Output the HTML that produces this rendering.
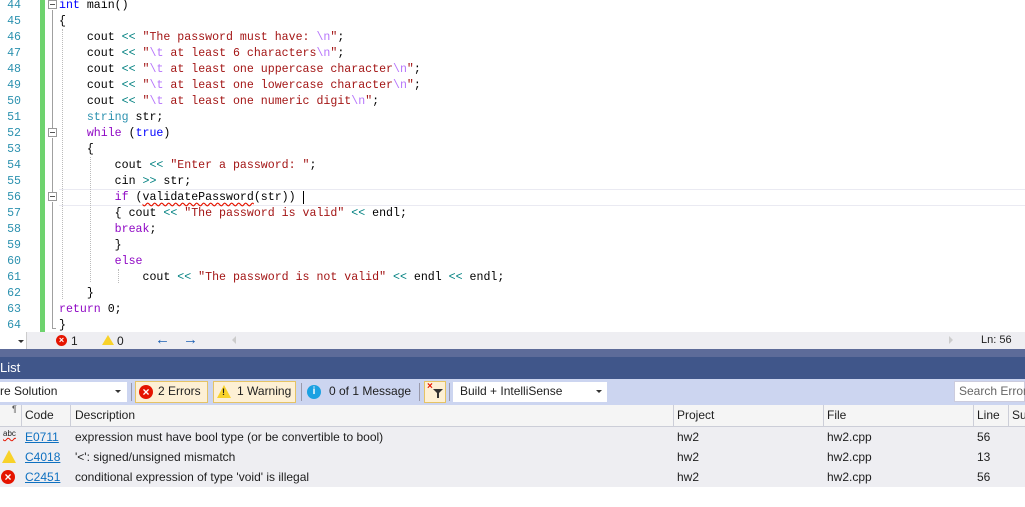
<!DOCTYPE html>
<html><head><meta charset="utf-8"><style>
*{margin:0;padding:0;box-sizing:border-box}
body{width:1025px;height:507px;overflow:hidden;background:#fff;position:relative;font-family:"Liberation Sans",sans-serif}
.ln{position:absolute;left:0;width:21px;text-align:right;font:11.6px "Liberation Mono",monospace;color:#2b91af;line-height:16px}
.code{position:absolute;left:59px;font:11.6px "Liberation Mono",monospace;color:#000;line-height:16px;white-space:pre}
.k{color:#0000ff}.c{color:#8f08c4}.s{color:#a31515}.e{color:#b776fb}.t{color:#2b91af}.o{color:#008080}
.ab{position:absolute}
.box{position:absolute;left:48px;width:9px;height:9px;border:1px solid #999;background:#fff}
.box:after{content:"";position:absolute;left:1px;top:3px;width:5px;height:1px;background:#555}
.vd{position:absolute;border-left:1px dotted #bbb;width:0}
.ui{font-size:12px;color:#1e1e1e;position:absolute;white-space:nowrap}
.hdr{position:absolute;top:405px;height:22px;line-height:21px;font-size:12px;color:#1e1e1e}
.sep{position:absolute;top:405px;width:1px;height:22px;background:#ccced8}
.row{position:absolute;left:0;width:1025px;height:20px;line-height:20px;font-size:12px;color:#1e1e1e}
.row span{position:absolute}
.lnk{color:#0e70c0;text-decoration:underline}
</style></head><body>
<div class="ab" style="left:40px;top:0;width:5px;height:332px;background:#6ed36e"></div>
<div class="ab" style="left:59px;top:189px;width:966px;height:17px;border-top:1px solid #eaeaf2;border-bottom:1px solid #eaeaf2"></div>
<div class="box" style="top:0px"></div>
<div class="box" style="top:128px"></div>
<div class="box" style="top:192px"></div>
<div class="ab" style="left:52px;top:10px;width:1px;height:118px;background:#a0a0a0"></div>
<div class="ab" style="left:52px;top:138px;width:1px;height:54px;background:#a0a0a0"></div>
<div class="ab" style="left:52px;top:202px;width:1px;height:126px;background:#a0a0a0"></div>
<div class="ab" style="left:52px;top:328px;width:4px;height:1px;background:#a0a0a0"></div>
<div class="vd" style="left:62px;top:29px;height:270px"></div>
<div class="vd" style="left:90px;top:157px;height:125px"></div>
<div class="vd" style="left:118px;top:269px;height:14px"></div>
<div class="ln" style="top:-2px">44<br>45<br>46<br>47<br>48<br>49<br>50<br>51<br>52<br>53<br>54<br>55<br>56<br>57<br>58<br>59<br>60<br>61<br>62<br>63<br>64</div>
<div class="code" style="top:-2px"><span class="k">int</span> main()
{
    cout <span class="o">&lt;&lt;</span> <span class="s">"The password must have: </span><span class="e">\n</span><span class="s">"</span>;
    cout <span class="o">&lt;&lt;</span> <span class="s">"</span><span class="e">\t</span><span class="s"> at least 6 characters</span><span class="e">\n</span><span class="s">"</span>;
    cout <span class="o">&lt;&lt;</span> <span class="s">"</span><span class="e">\t</span><span class="s"> at least one uppercase character</span><span class="e">\n</span><span class="s">"</span>;
    cout <span class="o">&lt;&lt;</span> <span class="s">"</span><span class="e">\t</span><span class="s"> at least one lowercase character</span><span class="e">\n</span><span class="s">"</span>;
    cout <span class="o">&lt;&lt;</span> <span class="s">"</span><span class="e">\t</span><span class="s"> at least one numeric digit</span><span class="e">\n</span><span class="s">"</span>;
    <span class="t">string</span> str;
    <span class="c">while</span> (<span class="k">true</span>)
    {
        cout <span class="o">&lt;&lt;</span> <span class="s">"Enter a password: "</span>;
        cin <span class="o">&gt;&gt;</span> str;
        <span class="c">if</span> (<span style="text-decoration:underline wavy #e51400;text-underline-offset:2px">validatePassword</span>(str)) <span style="border-left:1px solid #000"></span>
        { cout <span class="o">&lt;&lt;</span> <span class="s">"The password is valid"</span> <span class="o">&lt;&lt;</span> endl;
        <span class="c">break</span>;
        }
        <span class="c">else</span>
            cout <span class="o">&lt;&lt;</span> <span class="s">"The password is not valid"</span> <span class="o">&lt;&lt;</span> endl <span class="o">&lt;&lt;</span> endl;
    }
<span class="c">return</span> 0;
}</div>
<!-- status bar -->
<div class="ab" style="left:0;top:332px;width:1025px;height:17px;background:#eeeef2"></div>
<div class="ab" style="left:0;top:332px;width:27px;height:17px;background:#fff;border-right:1px solid #ccc"></div>
<div class="ab" style="left:18px;top:340px;border:3px solid transparent;border-top:3px solid #333"></div>
<div class="ab" style="left:56px;top:335px;width:11px;height:11px;border-radius:50%;background:#e51400;color:#fff;font-size:9px;line-height:11px;text-align:center;font-weight:bold">×</div>
<div class="ui" style="left:71px;top:334px">1</div>
<div class="ab" style="left:102px;top:335px;width:0;height:0;border-left:6px solid transparent;border-right:6px solid transparent;border-bottom:10px solid #f8d22a"></div>
<div class="ui" style="left:117px;top:334px">0</div>
<div class="ui" style="left:155px;top:331px;color:#1b5fb3;font-size:15px">←</div>
<div class="ui" style="left:183px;top:331px;color:#1b5fb3;font-size:15px">→</div>
<div class="ab" style="left:228px;top:336px;border:4px solid transparent;border-right:4px solid #ccc"></div>
<div class="ab" style="left:949px;top:336px;border:4px solid transparent;border-left:4px solid #ccc"></div>
<div class="ui" style="left:981px;top:334px;font-size:11px">Ln: 56</div>
<!-- title -->
<div class="ab" style="left:0;top:349px;width:1025px;height:8px;background:#5d6b99"></div>
<div class="ab" style="left:0;top:357px;width:1025px;height:22px;background:#40568a"></div>
<div class="ui" style="left:0;top:360px;color:#fff;font-size:13px">List</div>
<!-- toolbar -->
<div class="ab" style="left:0;top:379px;width:1025px;height:26px;background:#ccd5f0"></div>
<div class="ab" style="left:0;top:382px;width:127px;height:20px;background:#fff"></div>
<div class="ui" style="left:0;top:384px">re Solution</div>
<div class="ab" style="left:115px;top:390px;border:3px solid transparent;border-top:3px solid #333"></div>
<div class="ab" style="left:131px;top:383px;width:1px;height:18px;background:#99a"></div>
<div class="ab" style="left:135px;top:381px;width:73px;height:22px;background:#fdf0d5;border:1px solid #e5c365"></div>
<div class="ab" style="left:139px;top:385px;width:14px;height:14px;border-radius:50%;background:#e51400;color:#fff;font-size:12px;line-height:14px;text-align:center;font-weight:bold">×</div>
<div class="ui" style="left:158px;top:384px">2 Errors</div>
<div class="ab" style="left:213px;top:381px;width:83px;height:22px;background:#fdf0d5;border:1px solid #e5c365"></div>
<div class="ab" style="left:217px;top:385px;border-left:7px solid transparent;border-right:7px solid transparent;border-bottom:13px solid #f8d22a"></div>
<div class="ui" style="left:222px;top:387px;font-size:9px;font-weight:bold">!</div>
<div class="ui" style="left:237px;top:384px">1 Warning</div>
<div class="ab" style="left:301px;top:383px;width:1px;height:18px;background:#99a"></div>
<div class="ab" style="left:307px;top:385px;width:14px;height:14px;border-radius:50%;background:#1ba1e2;color:#fff;font-size:10px;line-height:14px;text-align:center;font-weight:bold">i</div>
<div class="ui" style="left:329px;top:384px">0 of 1 Message</div>
<div class="ab" style="left:419px;top:383px;width:1px;height:18px;background:#99a"></div>
<div class="ab" style="left:424px;top:381px;width:22px;height:22px;background:#fdf0d5;border:1px solid #e5c365"></div>
<div class="ui" style="left:427px;top:381px;color:#e51400;font-size:10px;font-weight:bold">×</div>
<div class="ab" style="left:433px;top:389px;border-left:5px solid transparent;border-right:5px solid transparent;border-top:5px solid #333"></div>
<div class="ab" style="left:437px;top:393px;width:2px;height:5px;background:#333"></div>
<div class="ab" style="left:449px;top:383px;width:1px;height:18px;background:#99a"></div>
<div class="ab" style="left:453px;top:382px;width:154px;height:20px;background:#fff"></div>
<div class="ui" style="left:460px;top:384px">Build + IntelliSense</div>
<div class="ab" style="left:596px;top:390px;border:3px solid transparent;border-top:3px solid #333"></div>
<div class="ab" style="left:954px;top:381px;width:71px;height:21px;background:#fff;border:1px solid #ccd"></div>
<div class="ui" style="left:959px;top:384px;color:#666">Search Error</div>
<!-- header -->
<div class="ab" style="left:0;top:405px;width:1025px;height:22px;background:#f5f5f5;border-bottom:1px solid #ccced8"></div>
<div class="ui" style="left:12px;top:404px;font-size:9px;color:#555">¶</div>
<div class="sep" style="left:21px"></div><div class="hdr" style="left:25px">Code</div>
<div class="sep" style="left:70px"></div><div class="hdr" style="left:75px">Description</div>
<div class="sep" style="left:673px"></div><div class="hdr" style="left:677px">Project</div>
<div class="sep" style="left:823px"></div><div class="hdr" style="left:827px">File</div>
<div class="sep" style="left:973px"></div><div class="hdr" style="left:977px">Line</div>
<div class="sep" style="left:1008px"></div><div class="hdr" style="left:1012px">Su</div>
<!-- rows -->
<div class="ab" style="left:0;top:427px;width:1025px;height:60px;background:#eeeef2"></div>
<div class="row" style="top:427px"><span style="left:3px;font-size:8px;top:-3px;text-decoration:underline wavy #e51400">abc</span><span class="lnk" style="left:25px">E0711</span><span style="left:75px">expression must have bool type (or be convertible to bool)</span><span style="left:677px">hw2</span><span style="left:827px">hw2.cpp</span><span style="left:977px">56</span></div>
<div class="row" style="top:447px"><span style="left:2px;top:3px;width:0;height:0;border-left:7px solid transparent;border-right:7px solid transparent;border-bottom:13px solid #f8d22a"></span><span class="lnk" style="left:25px">C4018</span><span style="left:75px">'&lt;': signed/unsigned mismatch</span><span style="left:677px">hw2</span><span style="left:827px">hw2.cpp</span><span style="left:977px">13</span></div>
<div class="row" style="top:467px"><span style="left:1px;top:3px;width:14px;height:14px;border-radius:50%;background:#e51400;color:#fff;line-height:14px;text-align:center;font-weight:bold">×</span><span class="lnk" style="left:25px">C2451</span><span style="left:75px">conditional expression of type 'void' is illegal</span><span style="left:677px">hw2</span><span style="left:827px">hw2.cpp</span><span style="left:977px">56</span></div>
</body></html>
